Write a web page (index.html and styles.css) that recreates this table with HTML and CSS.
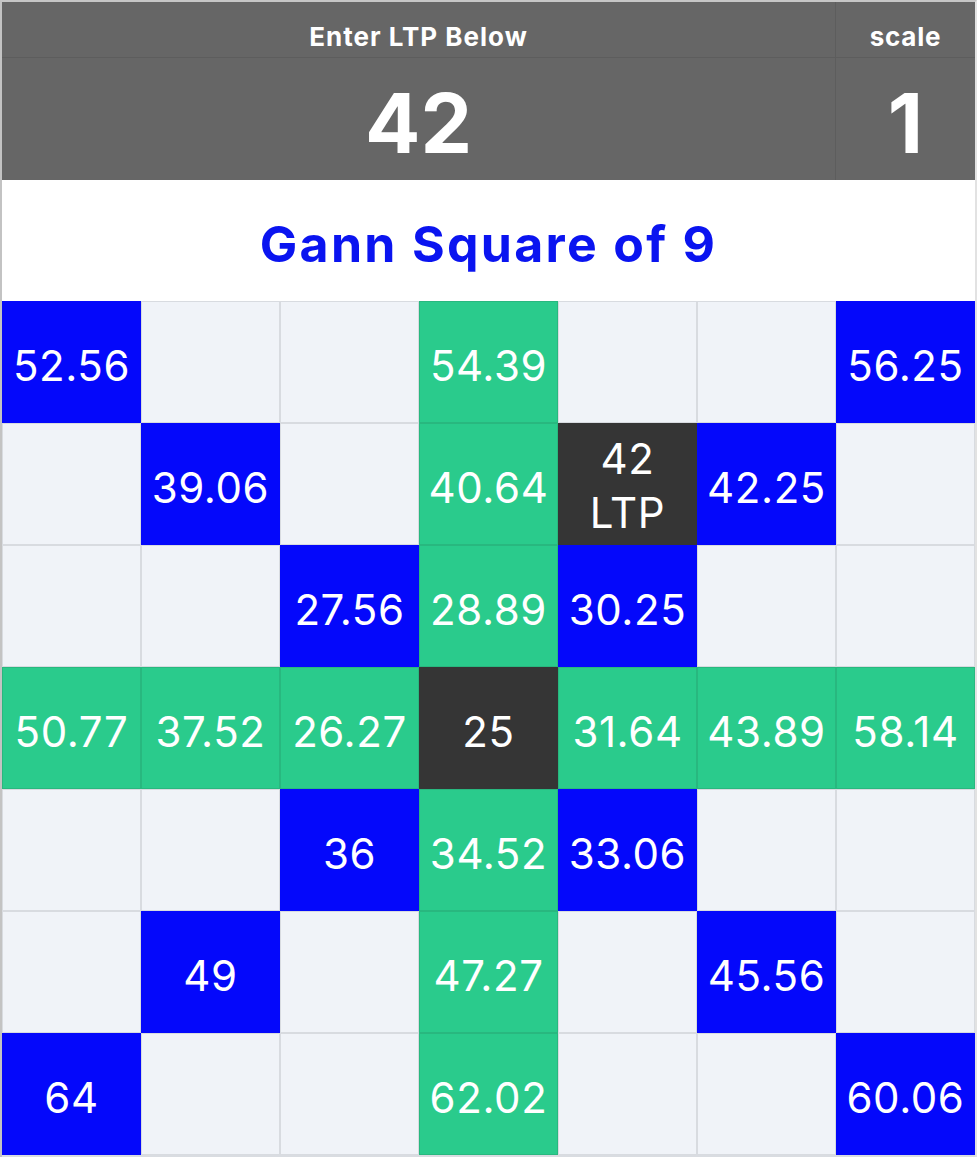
FILE: index.html
```html
<!DOCTYPE html>
<html>
<head>
<meta charset="utf-8">
<title>Gann Square of 9</title>
<link rel="stylesheet" href="styles.css">
</head>
<body>
<div class="sheet">
  <div class="header">
    <div class="hcell label main">Enter LTP Below</div>
    <div class="hcell label side">scale</div>
    <div class="hcell value main">42</div>
    <div class="hcell value side">1</div>
  </div>
  <div class="title">Gann Square of 9</div>
  <div class="grid">
    <div class="cell blue">52.56</div><div class="cell"></div><div class="cell"></div><div class="cell green">54.39</div><div class="cell"></div><div class="cell"></div><div class="cell blue">56.25</div>
    <div class="cell"></div><div class="cell blue">39.06</div><div class="cell"></div><div class="cell green">40.64</div><div class="cell dark two">42<br>LTP</div><div class="cell blue">42.25</div><div class="cell"></div>
    <div class="cell"></div><div class="cell"></div><div class="cell blue">27.56</div><div class="cell green">28.89</div><div class="cell blue">30.25</div><div class="cell"></div><div class="cell"></div>
    <div class="cell green">50.77</div><div class="cell green">37.52</div><div class="cell green">26.27</div><div class="cell dark">25</div><div class="cell green">31.64</div><div class="cell green">43.89</div><div class="cell green">58.14</div>
    <div class="cell"></div><div class="cell"></div><div class="cell blue">36</div><div class="cell green">34.52</div><div class="cell blue">33.06</div><div class="cell"></div><div class="cell"></div>
    <div class="cell"></div><div class="cell blue">49</div><div class="cell"></div><div class="cell green">47.27</div><div class="cell"></div><div class="cell blue">45.56</div><div class="cell"></div>
    <div class="cell blue">64</div><div class="cell"></div><div class="cell"></div><div class="cell green">62.02</div><div class="cell"></div><div class="cell"></div><div class="cell blue">60.06</div>
  </div>
</div>
</body>
</html>
```
FILE: styles.css
```css
html, body {
  margin: 0;
  padding: 0;
  background: #ffffff;
}
body {
  font-family: "Inter", "Lato", sans-serif;
}
.sheet {
  width: 973px;
  border-left: 2px solid #c3c3c3;
  border-top: 2px solid #c6c6c6;
  border-right: 2px solid #e2e2e2;
}
.header {
  display: grid;
  grid-template-columns: 834px 139px;
  grid-template-rows: 56px 122px;
  background: #666666;
  color: #ffffff;
}
.hcell {
  display: flex;
  justify-content: center;
  font-weight: 700;
  box-sizing: border-box;
}
.hcell.label {
  align-items: flex-end;
  font-size: 26px;
  letter-spacing: 1px;
  border-bottom: 1px solid #5d5d5d;
  padding-bottom: 5px;
}
.hcell.label.side {
  letter-spacing: 0.8px;
}
.hcell.value {
  align-items: center;
  font-size: 82px;
  padding-top: 8px;
}
.hcell.main {
  border-right: 1px solid #5d5d5d;
}
.title {
  height: 121px;
  display: flex;
  align-items: center;
  justify-content: center;
  color: #0a14f0;
  font-weight: 700;
  font-size: 50px;
  letter-spacing: 2.3px;
  padding-top: 6px;
  box-sizing: border-box;
}
.grid {
  display: grid;
  grid-template-columns: repeat(7, 1fr);
  grid-auto-rows: 122px;
  border-bottom: 2px solid #d9dce1;
}
.cell {
  display: flex;
  align-items: center;
  justify-content: center;
  text-align: center;
  background: #f0f3f8;
  color: #ffffff;
  font-size: 42px;
  letter-spacing: 0.6px;
  font-weight: 400;
  box-shadow: inset -1px -1px 0 #d8dbe0, inset 1px 1px 0 #d8dbe0;
  padding-top: 6px;
  box-sizing: border-box;
}
.cell.blue {
  background: #0408fb;
  box-shadow: none;
}
.cell.green {
  background: #2acb8c;
  box-shadow: inset -1px -1px 0 #28b87f, inset 1px 1px 0 #28b87f;
}
.cell.dark {
  background: #353535;
  box-shadow: none;
}
.cell.two {
  line-height: 54px;
  padding-top: 4px;
}
```
